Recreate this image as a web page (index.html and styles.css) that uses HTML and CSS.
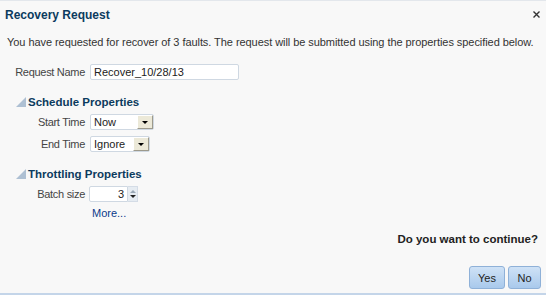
FILE: index.html
```html
<!DOCTYPE html>
<html>

<head>
    <meta charset="utf-8" />
    <title>Recovery Request</title>
    <link rel="stylesheet" href="styles.css">
</head>

<body>
    <div class="dialog">
        <div class="dialog-header">
            <span class="dialog-title">Recovery Request</span>
            <span class="close">
                <svg width="7" height="7" viewBox="0 0 7 7"><path d="M0.5 0.5L6.5 6.5M6.5 0.5L0.5 6.5" stroke="#333" stroke-width="1.4" /></svg>
            </span>
        </div>

        <p class="intro">You have requested for recover of 3 faults. The request will be submitted using the properties specified below.</p>

        <div class="form-row first-row">
            <label class="field-label">Request Name</label>
            <input class="text-field name-field" type="text" value="Recover_10/28/13">
        </div>

        <h4 class="section-title">
            <svg class="disclosure" width="10" height="10" viewBox="0 0 10 10"><polygon points="10,0 10,10 0,10" fill="#aec0d3" /></svg>
            Schedule Properties
        </h4>
        <div class="form-row">
            <label class="field-label">Start Time</label>
            <div class="select start-select"><span class="select-value">Now</span><span class="select-btn"><i></i></span></div>
        </div>
        <div class="form-row second-row">
            <label class="field-label">End Time</label>
            <div class="select end-select"><span class="select-value">Ignore</span><span class="select-btn"><i></i></span></div>
        </div>

        <h4 class="section-title">
            <svg class="disclosure" width="10" height="10" viewBox="0 0 10 10"><polygon points="10,0 10,10 0,10" fill="#aec0d3" /></svg>
            Throttling Properties
        </h4>
        <div class="form-row">
            <label class="field-label">Batch size</label>
            <div class="spinner">
                <span class="spinner-value">3</span>
                <span class="spinner-btns"><i class="up"></i><i class="down"></i></span>
            </div>
        </div>
        <a class="more-link" href="#">More...</a>

        <p class="confirm">Do you want to continue?</p>
        <div class="buttons">
            <button class="btn">Yes</button>
            <button class="btn">No</button>
        </div>
    </div>
</body>

</html>
```

FILE: styles.css
```css
body {
    margin: 0;
    background: #f8f8f8;
    font-family: "Liberation Sans", Arial, sans-serif;
    font-size: 11px;
    color: #333;
}

.dialog {
    height: 292px;
    border-top: 1px solid #e3e7ec;
    border-bottom: 2px solid #c4d5e9;
    display: flex;
    flex-direction: column;
}

.dialog-header {
    display: flex;
    justify-content: space-between;
    align-items: center;
    padding: 6px 6px 0 5px;
    height: 15px;
}

.dialog-title {
    font-size: 12px;
    font-weight: bold;
    color: #0c3b5e;
    line-height: 14px;
}

.close {
    display: flex;
}

.intro {
    margin: 13px 0 0 7px;
    line-height: 14px;
    white-space: nowrap;
    letter-spacing: -0.06px;
}

.form-row {
    display: flex;
    align-items: center;
    margin-top: 5px;
}

.first-row {
    margin-top: 15px;
}

.second-row {
    margin-top: 6px;
}

.field-label {
    width: 85px;
    text-align: right;
    margin-right: 5px;
    color: #444;
    letter-spacing: -0.3px;
}

.text-field {
    box-sizing: border-box;
    height: 16px;
    border: 1px solid #cfd8e2;
    border-radius: 2px;
    background: #fff;
    font-family: inherit;
    font-size: 11px;
    color: #222;
    padding: 0 3px;
    outline: none;
}

.name-field {
    width: 149px;
}

.section-title {
    display: flex;
    align-items: flex-end;
    margin: 15px 0 0 16px;
    font-size: 11.5px;
    font-weight: bold;
    color: #0c3b5e;
    line-height: 14px;
}

.disclosure {
    margin: 0 2px 2px 0;
}

.select {
    box-sizing: border-box;
    height: 16px;
    display: flex;
    align-items: center;
    justify-content: space-between;
    border: 1px solid #cfd8e2;
    border-radius: 2px;
    background: #fff;
    padding-left: 3px;
    color: #222;
}

.start-select {
    width: 64px;
}

.end-select {
    width: 60px;
}

.select-btn {
    box-sizing: border-box;
    width: 16px;
    height: 14px;
    background: #ece9d8;
    border: 1px solid;
    border-color: #fff #9d9a8c #9d9a8c #fff;
    display: flex;
    align-items: center;
    justify-content: center;
}

.select-btn i {
    width: 0;
    height: 0;
    border-left: 3px solid transparent;
    border-right: 3px solid transparent;
    border-top: 3px solid #000;
}

.spinner {
    display: flex;
    align-items: stretch;
    height: 16px;
    margin-left: -1px;
}

.spinner-value {
    box-sizing: border-box;
    width: 39px;
    border: 1px solid #cfd8e2;
    border-radius: 2px 0 0 2px;
    background: #fff;
    text-align: right;
    padding-right: 3px;
    line-height: 14px;
    color: #222;
}

.spinner-btns {
    width: 9px;
    background: #e6ecf2;
    border: 1px solid #d4dce6;
    border-left: none;
    display: flex;
    flex-direction: column;
    align-items: center;
    justify-content: center;
    gap: 2px;
}

.spinner-btns i {
    width: 0;
    height: 0;
    border-left: 3px solid transparent;
    border-right: 3px solid transparent;
}

.spinner-btns .up {
    border-bottom: 3px solid #9aa8b6;
}

.spinner-btns .down {
    border-top: 3px solid #222;
}

.more-link {
    margin: 4px 0 0 92px;
    line-height: 14px;
    color: #0b3a8a;
    text-decoration: none;
    align-self: flex-start;
}

.confirm {
    margin: 12px 8px 0 0;
    text-align: right;
    font-size: 11.5px;
    font-weight: bold;
    color: #222;
    line-height: 14px;
}

.buttons {
    display: flex;
    justify-content: flex-end;
    gap: 3px;
    margin: 20px 5px 0 0;
}

.btn {
    height: 23px;
    padding: 0;
    border: 1px solid #8fb1d8;
    border-radius: 3px;
    background: linear-gradient(#cfe2f6, #a9c9ec);
    font-family: inherit;
    font-size: 11px;
    color: #222;
}

.btn:first-child {
    width: 36px;
}

.btn:last-child {
    width: 33px;
}
```
